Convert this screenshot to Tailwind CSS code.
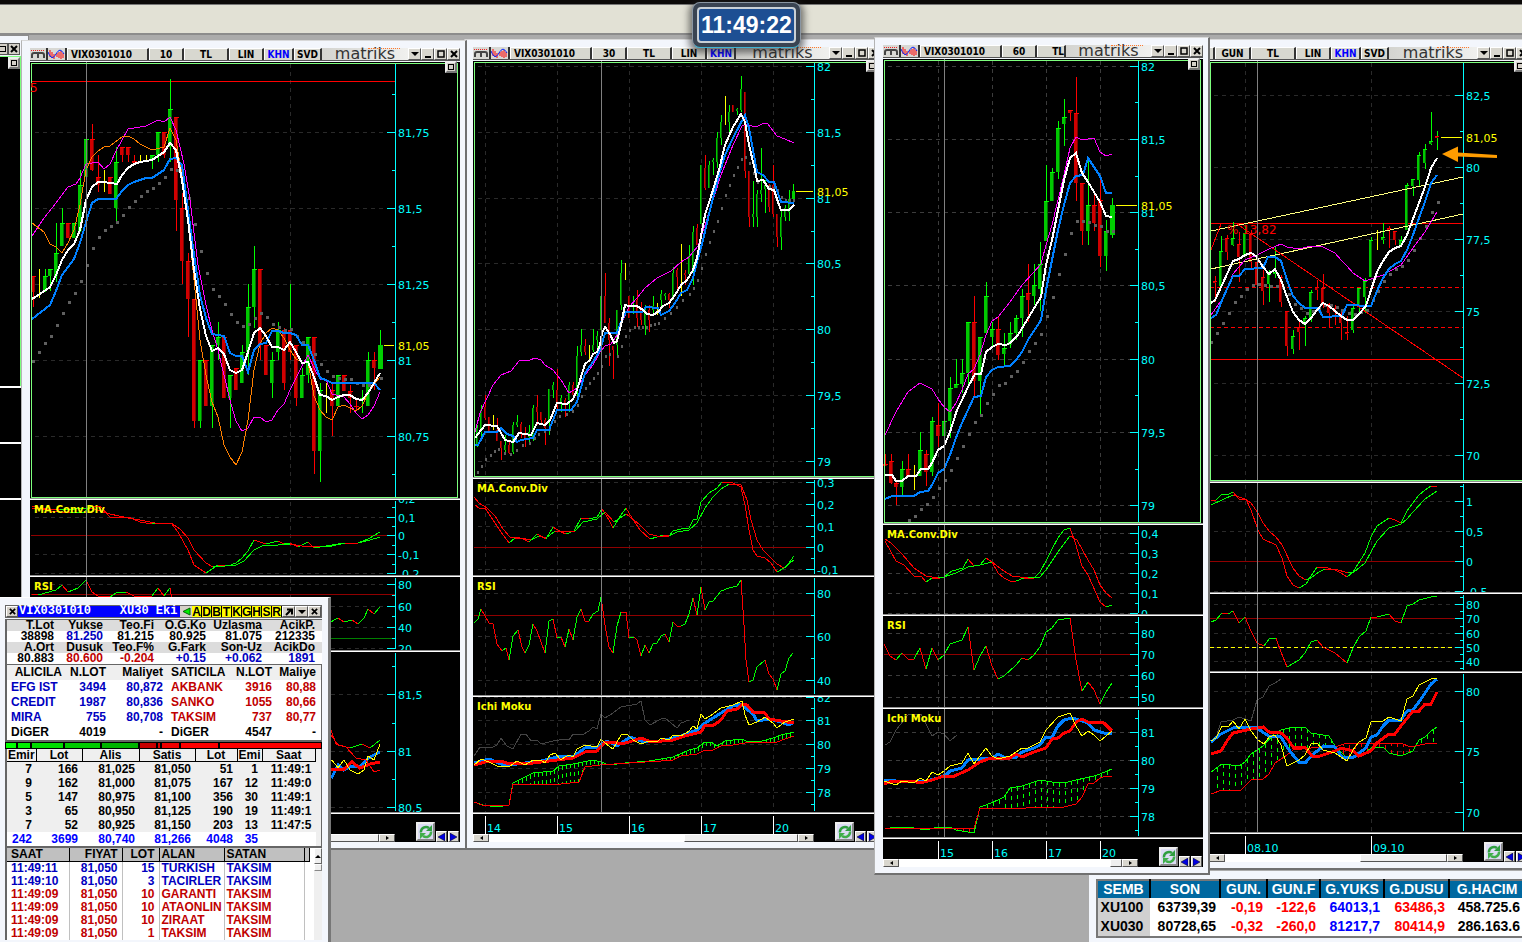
<!DOCTYPE html>
<html lang="tr">
<head>
    <meta charset="UTF-8">
    <meta name="viewport" content="width=device-width, initial-scale=1.0">
    <title>Matriks - VIX0301010</title>
    <script src="https://cdn.jsdelivr.net/npm/@tailwindcss/browser@4"></script>
</head>
<body class="bg-[#ababab] h-screen overflow-hidden relative font-['DejaVu_Sans',sans-serif]">
    <header class="h-[35px] bg-[#e2e1d5] border-t-4 border-t-[#0b0908] border-b-2 border-b-[#8c8c8c] shadow-[inset_0_1px_0_#777]"></header>

    <div class="absolute left-[692px] top-[2px] z-50 rounded-lg border border-[#8a96a2] border-b-[#3fb4d4] bg-[#3a4452] p-1 shadow-[0_2px_7px_3px_rgba(40,40,40,0.6)]">
        <div class="rounded border-2 border-[#c9d0d6] bg-[#1d4f93] px-[2px] text-center font-['Liberation_Sans',sans-serif] text-[23px] leading-[32px] font-bold text-white">11:49:22</div>
    </div>

    <!-- window cut off at the left edge -->
    <section class="absolute left-0 top-[35px] w-[29px] h-[570px] bg-[#f3f6fc] border-t border-r border-[#8c8c8c]">
        <div class="flex justify-between pt-[7px] pr-2">
            <button aria-label="Maximize" class="w-[8px] h-[12px] bg-[#d4d0c8] border border-[#555] border-l-0 flex items-center"><span class="size-[6px] border border-l-0 border-black"></span></button>
            <button aria-label="Close" class="size-[12px] bg-[#d4d0c8] border border-[#555] flex items-center justify-center"><svg width="8" height="8" viewBox="0 0 8 8"><path d="M1 1l6 6M7 1l-6 6" stroke="#000" stroke-width="2"/></svg></button>
        </div>
        <div class="mt-[1px] w-[21px] h-[330px] bg-black border-t border-r border-[#7dff7d] flex justify-end">
            <button aria-label="Maximize pane" class="size-[12px] bg-[#d4d0c8] border-2 border-[#eee] border-r-[#777] border-b-[#777] flex items-center justify-center"><span class="size-[6px] border border-black"></span></button>
        </div>
        <div class="w-[21px] h-[56px] bg-black border-t-2 border-white"></div>
        <div class="w-[21px] h-[56px] bg-black border-t-2 border-white"></div>
        <div class="w-[21px] h-[110px] bg-black border-t-2 border-white"></div>
    </section>

    <main id="windows"></main>

    <!-- order book -->
    <section class="absolute left-[-3px] top-[597px] z-40 w-[334px] h-[360px] bg-[#f3f6fc] border-t border-t-white border-r-[3px] border-r-[#777] pt-[7px] pl-2 pr-[6px] font-['Liberation_Sans',sans-serif] text-[12px] font-bold text-black">
        <div class="flex h-[13px] bg-[#d4d0c8] border border-[#666] leading-[12px]">
            <button aria-label="Close" class="w-[12px] border border-white border-r-[#555] border-b-[#555] flex items-center justify-center"><svg width="7" height="7" viewBox="0 0 8 8"><path d="M1 1l6 6M7 1l-6 6" stroke="#000" stroke-width="2"/></svg></button>
            <h2 class="flex-1 bg-[#0000ff] text-white font-['Liberation_Mono',monospace] whitespace-pre leading-[11px] pl-[1px]">VIX0301010    XU30 Eki</h2>
            <button aria-label="Previous" class="w-[12px] flex items-center justify-center"><svg width="9" height="9" viewBox="0 0 9 9"><path d="M8 1v7L1 4.5z" fill="#0e0" stroke="#060"/></svg></button>
            <div class="flex bg-[#ffff00] text-[12px]" id="letters"></div>
            <button aria-label="Detach" class="w-[13px] border border-white border-r-[#555] border-b-[#555] flex items-center justify-center"><svg width="8" height="8" viewBox="0 0 8 8"><path d="M1 7l5-5M2 1.5h5v5" fill="none" stroke="#000" stroke-width="2"/></svg></button>
            <button aria-label="Menu" class="w-[13px] border border-white border-r-[#555] border-b-[#555] flex items-center justify-center"><svg width="8" height="4" viewBox="0 0 8 4"><path d="M0 0h8L4 4z"/></svg></button>
            <button aria-label="Close book" class="w-[13px] border border-white border-r-[#555] border-b-[#555] flex items-center justify-center"><svg width="7" height="7" viewBox="0 0 8 8"><path d="M1 1l6 6M7 1l-6 6" stroke="#000" stroke-width="2"/></svg></button>
        </div>

        <table id="summary" class="mt-[1px] w-full h-[46px] table-fixed border-y border-l-2 border-[#666] bg-white text-right leading-[11px]">
            <colgroup><col class="w-[48px]"><col class="w-[49px]"><col class="w-[51px]"><col class="w-[52px]"><col class="w-[56px]"><col></colgroup>
        </table>

        <table id="brokers" class="w-full table-fixed border-l-2 border-b-2 border-r border-[#666] bg-white text-right leading-[15px]">
            <colgroup><col class="w-[56px]"><col class="w-[44px]"><col class="w-[57px]"><col class="w-[63px]"><col class="w-[46px]"><col></colgroup>
        </table>

        <div class="flex h-[7px] gap-[2px] bg-black py-[1px] px-[1px]">
            <span class="w-[10px] bg-[#00ff00]"></span><span class="w-[12px] bg-[#00f000]"></span><span class="w-[31px] bg-[#00dc00]"></span><span class="w-[35px] bg-[#00cc00]"></span><span class="w-[36px] bg-[#00b400]"></span><span class="w-[16px] bg-[#c80000]"></span><span class="w-[2px] bg-[#dc0000]"></span><span class="w-[17px] bg-[#f00000]"></span><span class="w-[37px] bg-[#ff0000]"></span><span class="flex-1 bg-[#ff0000]"></span>
        </div>

        <div class="bg-[#efefef] border-l-2 border-r border-b-2 border-[#666] pr-[5px]">
            <table id="depth" class="w-full table-fixed text-right text-[12px] leading-[14px]">
                <colgroup><col class="w-[29px]"><col class="w-[46px]"><col class="w-[57px]"><col class="w-[56px]"><col class="w-[42px]"><col class="w-[25px]"><col></colgroup>
            </table>
        </div>

        <div class="flex border-l-2 border-[#666] bg-white">
            <table id="trades" class="w-[303px] table-fixed text-[12px] leading-[13px]">
                <colgroup><col class="w-[62px]"><col class="w-[53px]"><col class="w-[37px]"><col class="w-[65px]"><col class="w-[80px]"><col></colgroup>
            </table>
            <div class="ml-1 flex-1 bg-[#efefef]">
                <button aria-label="Scroll up" class="w-full h-[16px] bg-[#efefef] border border-white border-r-[#666] border-b-[#666] flex items-center justify-center"><svg width="6" height="3" viewBox="0 0 6 3"><path d="M0 3h6L3 0z"/></svg></button>
                <div class="h-[7px] border border-white border-r-[#888] border-b-[#888]"></div>
            </div>
        </div>
    </section>

    <!-- index quotes -->
    <section class="absolute left-[1089px] right-0 top-[871px] z-[5] bg-[#f3f6fc] h-[80px] pl-[7px] pt-2 overflow-hidden font-['Liberation_Sans',sans-serif] text-[14px] font-bold">
        <table id="quotes" class="w-[430px] table-fixed border-2 border-[#777] bg-white text-right leading-[19px]">
            <colgroup><col class="w-[53px]"><col class="w-[70px]"><col class="w-[47px]"><col class="w-[53px]"><col class="w-[64px]"><col class="w-[65px]"><col></colgroup>
        </table>
    </section>

    <script>
        const CYAN = "#00ffff", WHITE = "#ffffff", BLUE = "#0080ff", MAG = "#ff00ff", ORANGE = "#ff8000", YELLOW = "#ffff00", RED = "#ff0000";

        // points are given in desktop pixels; every pane's viewBox starts at its own desktop position
        const windows = [
            {
                pos: "left-[21px] top-[40px] w-[446px] z-20", x0: 30, x1: 460, axis: 395, cross: 86, grid: [290], gridColor: "#2a2a2a", bw: 5,
                cells: [["VIX0301010", "w-[82px] text-left pl-[3px]"], ["10", "w-[35px]"], ["TL", "w-[45px]"], ["LIN", "w-[35px]"], ["KHN", "w-[30px] text-[#0000ff]"], ["SVD", "w-[28px]"]],
                times: [], timeY: [814, 834], thumb: "w-[60px]", track: "w-[40px]",
                panes: [
                    {
                        y: [62, 498], main: true, price: ["81,05", 345, 384],
                        labels: [["81,75", 132], ["81,5", 208], ["81,25", 284], ["81", 360], ["80,75", 436]], minor: [94, 170, 246, 322, 398, 474],
                        hlines: [[81, RED]], notes: [["5", 30, 92]],
                        candles: "33 276 307 276 292 r|39 269 298 y|45 269 292 276 291 g|50 269 291 269 276 g|56 223 282 253 276 g|62 208 246 223 246 g|68 223 238 r|74 223 238 g|80 170 232 185 231 g|86 133 177 139 177 g|92 124 171 139 170 r|98 155 192 177 185 r|104 170 192 y|110 177 194 r|116 147 221 162 208 g|122 147 162 147 155 r|128 147 162 147 155 r|134 155 163 161 163 r|140 155 162 y|146 155 162 y|152 155 169 155 160 g|158 132 162 132 155 g|164 132 158 132 155 r|170 79 162 109 147 g|176 117 231 117 200 r|182 193 284 208 261 r|188 253 337 261 299 r|194 299 428 299 421 r|200 360 428 360 421 g|206 360 406 r|212 345 428 345 406 g|218 322 360 337 345 g|224 337 398 r|230 375 428 375 398 g|236 368 390 r|242 345 383 352 383 g|248 284 375 307 352 g|254 246 328 269 307 g|260 269 360 269 345 r|266 345 375 r|272 352 398 360 383 g|278 322 360 330 352 g|284 328 390 330 383 r|290 284 330 284 284 g|290 330 360 330 352 r|296 345 406 345 398 r|302 368 398 375 398 g|308 337 383 337 375 g|314 337 474 337 451 r|320 383 482 390 451 g|326 383 413 y|332 383 436 390 406 r|338 375 406 g|344 375 391 r|350 385 413 391 398 r|356 398 411 406 407 r|362 390 413 398 400 g|368 352 406 360 406 g|374 352 390 360 368 r|380 330 369 345 369 G",
                        dots: "33,361 39,352 45,343 51,336 57,325 63,313 69,302 75,293 81,281 87,265 93,248 99,237 105,230 111,226 117,222 123,215 129,207 135,201 141,196 147,191 153,188 159,183 165,177 171,169 177,170 183,185 189,198 195,224 201,251 207,273 213,289 219,296 225,304 231,314 237,322 243,326 249,324 255,318 261,313 267,317 273,324 279,327 285,330 291,329 297,336 303,342 309,347 315,354 321,364 327,371 333,376 339,378 345,379 351,379 357,383 363,385 369,385 375,380 381,378",
                        lines: [
                            [MAG, 1, "32,236 44,218 56,203 68,187 76,184 80,178 86,164 98,162 104,169 110,164 116,151 128,129 146,126 158,120 164,122 170,117 176,130 184,164 190,200 198,265 206,305 212,330 218,350 224,375 230,400 236,421 242,431 248,428 254,417 260,417 266,422 272,420 278,410 284,404 290,390 296,378 302,366 308,355 314,368 320,379 326,380 332,394 344,397 350,404 356,413 362,419 368,415 374,406 380,392"],
                            [ORANGE, 1, "32,223 44,232 50,244 56,247 62,253 68,243 74,230 80,205 86,170 92,157 98,151 104,147 110,146 122,137 128,136 134,139 140,144 152,150 164,147 170,128 176,140 182,175 188,220 194,280 200,340 206,375 212,402 218,417 224,445 230,457 236,465 242,452 248,420 254,370 260,344 266,333 272,328 278,330 284,338 290,350 296,359 302,362 308,362 314,396 320,410 326,417 332,420 338,407 344,405 350,408 356,411 362,406 368,393 380,377"],
                            [BLUE, 2, "32,319 50,305 56,291 62,275 68,267 74,259 80,243 86,222 92,203 98,199 116,199 122,191 128,185 134,182 146,178 152,178 158,174 164,170 170,159 176,158 182,165 188,210 194,255 200,295 206,318 212,334 218,335 224,336 230,353 236,356 242,356 248,372 254,350 260,344 266,343 272,331 278,331 284,333 290,333 296,335 302,345 308,345 314,360 320,378 326,380 332,383 374,383 380,390"],
                            [WHITE, 2, "32,299 40,294 50,287 56,275 62,260 68,250 74,244 80,230 86,200 92,187 98,182 104,182 117,184 122,175 128,168 134,164 140,162 152,160 158,156 164,152 170,143 176,150 182,180 188,220 194,270 200,309 206,336 212,351 218,348 224,354 230,370 236,373 242,370 248,352 254,333 260,328 266,336 272,347 278,347 284,350 290,342 296,352 302,363 308,362 314,377 320,395 326,396 332,400 338,397 344,395 350,395 356,399 362,400 368,393 374,383 380,373"]
                        ]
                    },
                    {
                        y: [500, 575], title: "MA.Conv.Div", labels: [["0,2", 498], ["0,1", 517], ["0", 535], ["-0,1", 554], ["-0,2", 573]], minor: [507, 526, 545, 564], hlines: [[535, "#900000"]],
                        trend: ["32,506 50,511 70,513 84,512 92,506 100,506 110,517 128,517 140,522 152,524 160,523 171,523 178,532 188,550 194,565 206,573 212,569 218,565 228,566 236,563 242,558 248,551 254,540 266,544 278,541 284,544 290,543 298,547 308,542 314,548 326,546 338,544 350,543 358,543 368,539 380,532",
                            "32,508 60,510 90,508 110,514 128,518 140,520 155,523 171,523 180,529 188,538 194,550 206,563 213,567 225,566 236,565 244,561 254,550 262,546 278,545 290,544 302,546 320,547 332,546 345,543 358,543 370,540 380,537"]
                    },
                    {
                        y: [577, 650], title: "RSI", labels: [["80", 584], ["60", 606], ["40", 627], ["20", 648]], minor: [595, 616, 638], hlines: [[594, "#900000"], [638, "#008000"]],
                        trend: ["32,594 38,595 56,590 62,585 68,592 78,588 86,580 92,592 98,596 110,597 116,593 126,592 134,596 152,596 158,588 164,596 170,588 176,625 194,640 230,628 254,605 290,615 314,632 325,625 338,618 344,622 352,620 358,624 364,618 368,609 374,614 380,607"]
                    },
                    {
                        y: [652, 812], title: "", labels: [["81,5", 694], ["81", 751], ["80,5", 807]], minor: [666, 723, 779],
                        trend: ["300,770 331,735 338,745 350,748 362,744 370,748 380,740"],
                        lines: [[BLUE, 3, "320,770 332,777 338,765 344,770 352,766 360,767 366,760 372,756 380,752"], [RED, 3, "320,769 344,769 352,762 360,768 370,764 380,762"], [YELLOW, 1, "320,775 332,760 338,768 344,760 350,770 358,774 364,770 368,756 374,760 380,744"], [RED, 1, "331,730 336,744 346,747 356,758 366,760 374,772 380,770"]]
                    }
                ]
            },
            {
                pos: "left-[464px] top-[39px] w-[424px] z-10", x0: 473, x1: 881, axis: 814, cross: 601, grid: [485, 557, 629, 701, 773], gridColor: "#2a2a2a", bw: 3,
                cells: [["VIX0301010", "w-[82px] text-left pl-[3px]"], ["30", "w-[35px]"], ["TL", "w-[45px]"], ["LIN", "w-[35px]"], ["KHN", "w-[29px] text-[#0000ff]"]],
                times: [["14", 485], ["15", 557], ["16", 629], ["17", 701], ["20", 773]], timeY: [814, 834], thumb: "w-[114px]", track: "w-[30px]",
                panes: [
                    {
                        y: [61, 477], main: true, price: ["81,05", 191, 796],
                        labels: [["82", 66], ["81,5", 132], ["81", 198], ["80,5", 263], ["80", 329], ["79,5", 395], ["79", 461]], minor: [99, 165, 231, 296, 362, 428],
                        candles: "477 425 447 428 445 g|481 405 436 410 432 g|485 395 420 407 418 r|489 417 431 r|493 415 430 y|497 418 441 430 441 r|501 441 460 441 448 r|505 435 452 445 450 g|509 440 454 445 453 r|513 422 454 425 452 g|517 415 427 422 425 g|521 422 438 424 432 r|525 427 447 434 440 r|529 425 445 432 437 g|533 405 441 408 438 g|537 395 425 407 412 r|541 412 425 412 420 r|545 418 445 420 428 r|549 389 435 389 420 g|553 382 398 385 390 g|557 369 410 390 405 r|561 395 412 398 404 g|565 398 417 400 405 r|569 382 412 385 400 g|573 382 400 385 395 r|577 346 400 356 390 g|581 329 356 345 352 g|585 339 355 346 352 r|589 345 360 y|593 329 352 345 350 g|597 331 350 336 340 g|601 296 335 296 330 g|605 273 323 296 323 r|609 318 366 323 340 r|613 346 379 346 350 r|617 310 356 310 345 g|621 260 310 273 305 g|625 263 280 y|629 296 318 r|633 296 314 305 307 g|637 290 327 300 318 r|641 302 325 308 320 r|645 305 335 310 325 g|649 305 332 310 320 r|653 296 315 306 310 g|657 303 315 y|661 290 308 294 300 g|665 293 300 294 296 g|669 293 308 294 300 r|673 267 300 273 300 g|677 268 290 270 277 r|681 244 296 y|685 270 285 273 275 r|689 245 276 256 274 g|693 226 285 232 270 g|697 224 245 228 245 r|701 165 224 g|705 155 190 168 188 r|709 161 188 165 188 g|713 158 175 160 162 g|717 132 168 138 162 g|721 115 145 122 138 g|725 96 125 y|729 105 135 112 122 g|733 105 112 r|737 108 115 109 111 g|741 76 112 89 110 g|745 92 178 92 171 r|749 171 227 171 217 r|753 181 227 214 217 g|757 190 227 194 217 g|761 148 202 190 194 g|765 180 213 185 189 g|769 184 212 185 207 r|773 165 217 185 214 r|777 214 247 214 237 r|781 210 250 217 237 g|785 205 221 208 217 g|789 190 221 199 212 g|793 184 205 191 199 G",
                        dots: "478,472 482,466 486,459 491,455 495,451 499,449 505,453 511,454 517,450 523,445 530,443 535,438 539,434 545,431 550,429 555,421 560,416 567,414 573,411 578,405 582,396 586,388 590,383 594,378 598,373 602,366 606,356 610,354 618,356 622,346 626,336 630,330 635,327 639,327 643,327 647,327 651,325 655,324 659,323 665,318 671,313 677,307 683,300 690,294 694,288 698,280 702,268 706,254 710,242 714,231 718,221 722,208 726,195 730,185 734,175 738,167 742,159 746,157 750,163 754,173 758,182 766,184 770,186 774,188 778,190 782,197 786,200 790,200 794,200",
                        lines: [
                            [MAG, 1, "475,432 480,413 487,398 493,385 501,375 511,371 519,361 530,360 535,358 541,360 545,365 553,370 561,380 569,393 577,388 585,375 593,365 600,352 605,346 611,344 617,335 622,322 629,307 637,298 645,288 657,278 671,271 681,262 689,257 698,246 705,225 713,200 721,175 733,145 742,126 746,124 752,126 758,126 764,123 768,124 777,136 785,139 794,143"],
                            [BLUE, 2, "475,445 478,445 485,432 497,432 501,428 507,434 513,436 517,442 521,440 533,438 537,430 549,430 557,410 571,410 577,402 585,373 593,362 600,350 605,333 617,333 621,322 626,312 642,312 646,307 658,308 661,315 669,311 675,303 681,293 687,290 693,278 697,262 703,240 710,210 719,175 725,155 733,138 745,115 749,128 757,172 763,175 769,182 774,182 781,202 794,203"],
                            [WHITE, 2, "475,438 485,425 497,426 505,440 509,441 513,442 519,433 525,434 531,435 537,423 545,425 550,420 557,403 567,404 573,399 577,390 585,364 590,360 593,354 597,352 600,345 602,333 605,327 610,334 614,343 617,341 621,325 625,305 629,306 637,306 643,310 647,314 653,315 659,311 663,306 669,303 675,295 681,285 687,280 693,270 697,258 701,236 705,215 713,190 719,170 725,145 733,127 741,114 745,122 749,145 755,170 757,181 763,180 769,189 774,190 778,202 781,210 789,210 794,205"]
                        ]
                    },
                    {
                        y: [479, 575], title: "MA.Conv.Div", labels: [["0,3", 482], ["0,2", 504], ["0,1", 526], ["0", 547], ["-0,1", 569]], minor: [493, 515, 536, 558], hlines: [[547, "#900000"]],
                        trend: ["475,505 479,508 485,508 493,520 501,532 509,543 515,538 523,539 529,542 537,534 546,539 553,527 561,532 566,534 574,531 581,518 589,519 597,517 602,509 609,520 613,528 621,515 626,508 632,518 640,530 650,539 657,537 663,535 669,536 673,531 681,529 689,528 693,520 697,519 701,502 709,493 717,488 722,482 731,482 741,487 745,505 749,530 753,550 757,556 765,558 771,563 777,572 786,567 794,556",
                            "474,497 479,503 487,508 495,516 503,529 510,537 520,538 531,540 539,536 546,538 555,531 563,531 575,531 583,522 597,519 605,512 614,522 626,514 633,519 641,526 649,534 657,536 669,536 677,532 689,530 697,523 705,508 713,497 721,489 729,484 741,485 747,500 751,520 757,540 763,550 777,564 784,568 790,563 794,560"]
                    },
                    {
                        y: [577, 695], title: "RSI", labels: [["80", 593], ["60", 636], ["40", 680]], minor: [615, 658], hlines: [[615, "#900000"]],
                        trend: ["474,623 478,619 481,609 489,623 493,624 497,644 502,651 506,648 509,660 513,636 518,630 522,647 525,653 529,645 533,624 537,631 541,642 545,653 549,621 553,619 557,638 561,637 565,647 569,629 573,640 577,617 581,609 585,621 589,621 593,614 598,611 601,597 605,625 609,647 613,653 617,626 621,612 626,612 629,638 634,637 637,640 641,656 645,645 649,653 653,644 657,643 661,636 665,634 669,642 673,622 677,626 681,626 685,624 689,614 693,598 697,615 701,587 705,610 709,602 713,601 721,591 729,588 737,586 741,580 744,625 746,660 749,682 753,680 757,667 765,660 769,674 773,679 777,690 781,674 785,671 789,658 793,653"]
                    },
                    {
                        y: [697, 812], title: "Ichi Moku", labels: [["82", 697], ["81", 720], ["80", 744], ["79", 768], ["78", 792]], minor: [708, 732, 756, 780, 804],
                        cloud: [4, "474,802 483,805 497,807 509,805 513,783 525,777 533,773 553,771 559,766 573,764 593,760 601,762 609,765 625,763 649,761 673,757 689,750 697,748 705,742 711,742 717,746 725,741 741,739 749,742 762,741 773,738 781,735 794,732", "474,802 482,805 509,805 513,784 561,784 579,782 585,767 600,765 629,763 661,761 673,760 681,756 697,754 705,750 713,750 721,746 733,745 745,743 777,742 785,739 794,736"],
                        lines: [
                            ["#444", 1, "474,756 480,747 493,747 497,745 501,738 507,746 513,749 521,734 526,734 531,741 537,740 541,744 553,741 565,739 569,740 573,734 582,735 589,731 593,727 597,729 601,714 605,718 613,713 621,707 637,704 641,701 645,720 650,725 661,719 665,718 671,723 677,728 681,723 689,720"],
                            [BLUE, 3, "474,763 489,759 501,764 517,764 541,761 561,756 573,757 585,748 597,747 607,741 617,746 630,737 641,741 661,741 681,736 697,730 705,723 721,713 733,706 742,704 749,711 753,714 757,721 769,719 781,722 789,725 794,722"],
                            [RED, 3, "474,765 489,761 501,761 509,764 533,763 549,761 573,758 585,752 597,751 605,742 613,742 621,744 629,742 641,738 651,742 673,740 685,736 701,732 705,725 714,725 721,720 727,711 737,709 743,704 747,705 753,712 765,713 769,719 781,721 794,723"],
                            [YELLOW, 1, "474,765 481,759 489,762 497,766 509,767 517,761 525,765 533,760 541,760 545,763 550,755 555,753 561,760 565,757 569,755 573,757 577,749 585,745 597,747 601,739 605,743 613,749 621,735 627,734 633,740 641,744 649,741 657,742 661,738 669,740 673,735 681,736 689,731 693,726 697,729 701,714 705,719 713,714 721,708 733,705 742,701 745,715 749,725 757,722 765,717 773,723 777,728 785,722 794,719"]
                        ]
                    }
                ]
            },
            {
                pos: "left-[1200px] top-[39px] w-[336px] z-10", x0: 1209, x1: 1529, axis: 1463, cross: 1257, grid: [1245, 1371], gridColor: "#2a2a2a", bw: 4, noIcons: true,
                cells: [["", "w-[6px]"], ["GUN", "w-[36px]"], ["TL", "w-[45px]"], ["LIN", "w-[35px]"], ["KHN", "w-[30px] text-[#0000ff]"], ["SVD", "w-[28px]"]],
                times: [["08.10", 1245], ["09.10", 1371]], timeY: [834, 854], thumb: "w-[87px]", track: "w-[30px]",
                panes: [
                    {
                        y: [61, 481], main: true, price: ["81,05", 137, 1441],
                        labels: [["82,5", 95], ["80", 167], ["77,5", 239], ["75", 311], ["72,5", 383], ["70", 455]], minor: [131, 203, 275, 347, 419],
                        hlines: [[223, RED], [359, RED], [287, RED, "4 3"], [327, RED, "4 3"]], notes: [["% 13,82", 1227, 234]], arrow: true,
                        candles: "1215 276 302 281 283 r|1221 236 287 251 286 g|1227 235 260 238 252 r|1233 222 246 238 245 g|1239 232 282 244 257 r|1245 225 255 233 255 g|1251 230 268 234 262 r|1257 262 285 r|1263 270 305 277 291 r|1269 270 302 274 284 g|1275 247 278 272 274 g|1281 275 307 277 302 r|1287 311 356 311 346 r|1293 330 354 336 349 g|1299 320 350 327 332 r|1305 316 346 318 325 g|1311 290 322 292 318 g|1317 280 300 287 290 r|1323 274 308 288 303 r|1329 303 327 304 313 r|1335 305 325 308 312 r|1341 310 340 315 323 r|1347 316 340 332 334 r|1353 305 333 308 330 g|1359 288 312 288 307 g|1365 278 313 281 297 g|1371 237 277 240 277 g|1377 230 250 y|1383 223 244 237 240 g|1389 226 248 228 231 r|1395 231 245 231 240 r|1401 236 247 240 245 g|1407 183 230 185 230 g|1413 179 196 179 186 g|1419 152 186 155 180 g|1425 144 169 149 163 g|1431 112 145 141 144 g|1437 131 150 136 136 g|1437 136 138 r",
                        dots: "1211,342 1217,333 1223,323 1229,313 1235,302 1241,296 1247,289 1253,285 1259,284 1265,285 1271,286 1277,286 1283,287 1289,294 1295,304 1301,308 1307,313 1313,311 1319,308 1325,305 1331,305 1337,307 1342,310 1349,313 1355,314 1361,312 1367,310 1373,300 1378,291 1384,281 1390,274 1396,269 1402,266 1408,260 1414,250 1420,238 1426,226 1432,212 1438,202",
                        lines: [
                            ["#ffff80", 1, "1211,231 1463,177"], ["#ffff80", 1, "1211,269 1463,214"], [RED, 1, "1237,224 1463,378"], [RED, 1, "1211,250 1221,224"],
                            [MAG, 1, "1211,315 1223,298 1233,274 1245,260 1257,255 1269,249 1281,244 1287,247 1299,249 1311,246 1323,247 1335,253 1341,260 1347,266 1353,273 1359,277 1365,281 1371,279 1383,275 1401,265 1413,248 1425,232 1437,212"],
                            [BLUE, 2, "1211,318 1216,315 1223,298 1233,276 1239,276 1245,269 1263,268 1268,257 1275,257 1281,261 1287,280 1293,296 1299,303 1305,308 1318,308 1323,317 1342,316 1347,305 1371,306 1377,291 1383,278 1389,269 1395,264 1401,261 1407,250 1413,235 1419,218 1425,202 1431,183 1437,175"],
                            [WHITE, 2, "1211,303 1215,300 1223,283 1233,261 1239,259 1245,255 1251,253 1256,256 1263,267 1269,274 1275,269 1281,280 1287,297 1293,312 1299,320 1305,324 1311,318 1317,310 1323,303 1329,306 1335,311 1341,316 1347,320 1353,320 1359,314 1366,306 1371,290 1377,272 1383,261 1389,252 1395,248 1401,246 1407,235 1413,219 1419,203 1425,187 1431,168 1437,158"]
                        ]
                    },
                    {
                        y: [483, 592], title: "", labels: [["1", 501], ["0,5", 531], ["0", 561], ["-0,5", 591]], minor: [486, 516, 546, 576], hlines: [[561, "#900000"]],
                        trend: ["1211,500 1216,500 1221,495 1229,494 1233,492 1239,499 1246,499 1251,510 1258,530 1263,539 1276,545 1282,558 1287,576 1293,585 1299,588 1306,584 1311,576 1317,567 1324,567 1335,570 1341,573 1347,577 1353,572 1365,553 1371,537 1377,526 1389,518 1395,520 1401,523 1407,511 1413,503 1419,495 1425,490 1431,486 1437,487",
                            "1211,505 1233,495 1239,497 1245,499 1251,503 1258,513 1263,523 1270,532 1276,537 1282,545 1293,568 1299,576 1306,580 1311,578 1319,572 1325,569 1335,569 1348,573 1354,572 1365,563 1371,552 1377,541 1389,528 1401,524 1407,519 1413,512 1425,499 1437,491"]
                    },
                    {
                        y: [594, 671], title: "", labels: [["80", 604], ["70", 618], ["60", 633], ["50", 647], ["40", 661]], minor: [597, 611, 626, 640, 654, 668], hlines: [[618, "#900000"], [647, YELLOW, "4 3"]],
                        trend: ["1211,622 1216,620 1222,613 1228,614 1233,611 1239,623 1245,617 1251,631 1257,643 1264,646 1269,639 1276,638 1281,652 1287,667 1299,660 1305,653 1311,642 1317,640 1323,647 1335,653 1341,658 1347,663 1353,648 1359,637 1366,631 1371,617 1377,617 1389,614 1395,621 1401,623 1407,606 1413,604 1419,600 1431,597 1437,596"]
                    },
                    {
                        y: [673, 832], title: "", labels: [["80", 691], ["75", 751], ["70", 812]], minor: [721, 782],
                        cloud: [6, "1211,772 1222,764 1239,766 1245,762 1251,754 1263,746 1275,733 1281,730 1293,727 1305,727 1311,733 1329,736 1335,746 1345,756 1353,758 1365,753 1371,748 1383,747 1389,753 1401,756 1413,751 1419,740 1425,737 1431,731 1437,727", "1211,794 1222,790 1241,790 1251,780 1263,779 1269,774 1275,763 1287,755 1293,750 1311,748 1335,747 1347,743 1401,743 1410,747 1425,744 1437,743"],
                        lines: [
                            ["#444", 1, "1211,742 1216,738 1221,722 1233,720 1239,717 1245,719 1251,721 1257,700 1263,697 1269,686 1275,683 1281,679"],
                            [BLUE, 3, "1211,742 1221,734 1233,728 1245,727 1257,728 1264,733 1269,736 1281,737 1287,747 1293,755 1299,762 1306,762 1312,755 1324,746 1335,747 1342,757 1354,757 1366,748 1371,737 1377,735 1383,726 1389,720 1401,720 1407,711 1413,710 1419,702 1431,684 1437,679"],
                            [RED, 3, "1211,754 1221,751 1227,741 1233,733 1251,729 1263,727 1269,732 1281,733 1287,738 1293,747 1305,747 1312,756 1317,757 1335,751 1341,748 1353,751 1359,756 1371,751 1377,743 1389,734 1395,734 1401,726 1413,711 1419,711 1425,704 1431,704 1437,692"],
                            [YELLOW, 1, "1211,741 1216,738 1222,726 1228,727 1233,721 1239,729 1245,719 1251,731 1258,740 1264,744 1269,737 1275,735 1281,745 1287,766 1299,760 1305,755 1311,744 1317,743 1323,750 1335,753 1347,761 1353,750 1359,742 1366,738 1371,722 1383,721 1389,717 1401,721 1407,699 1413,696 1419,685 1431,679 1437,678"]
                        ]
                    }
                ]
            },
            {
                pos: "left-[874px] top-[37px] w-[336px] z-30", x0: 883, x1: 1203, axis: 1138, cross: 944, grid: [938, 992, 1046, 1100], gridColor: "#3c3c3c", bw: 5,
                cells: [["VIX0301010", "w-[82px] text-left pl-[3px]"], ["60", "w-[35px]"], ["TL", "w-[29px] text-right"]],
                times: [["15", 938], ["16", 992], ["17", 1046], ["20", 1100]], timeY: [839, 859], thumb: "w-[12px]", track: "w-[30px]",
                panes: [
                    {
                        y: [59, 523], main: true, price: ["81,05", 205, 1116],
                        labels: [["82", 66], ["81,5", 139], ["81", 212], ["80,5", 285], ["80", 359], ["79,5", 432], ["79", 505]], minor: [102, 176, 249, 322, 395, 469],
                        candles: "885 454 466 464 466 r|891 454 484 461 483 r|896 482 505 483 487 r|902 461 496 469 487 g|908 454 476 469 476 r|914 465 490 y|920 432 476 450 476 g|926 450 486 454 472 r|932 417 476 421 472 g|938 403 447 425 436 r|944 421 436 g|950 377 438 388 421 g|956 359 388 384 388 g|962 359 393 373 384 g|968 322 384 322 373 g|974 296 397 322 381 r|980 337 414 337 381 g|986 282 335 296 333 g|992 322 347 329 337 g|998 316 360 329 355 r|1004 333 366 348 354 g|1010 322 348 333 345 g|1016 315 340 318 333 g|1022 289 337 296 318 g|1028 264 322 293 300 r|1034 264 305 285 296 g|1040 242 311 264 289 g|1046 165 241 201 241 g|1052 168 201 172 201 g|1058 121 179 128 172 g|1064 99 146 117 124 g|1070 110 121 110 113 r|1076 77 201 113 183 r|1082 183 245 183 231 r|1088 157 245 205 231 g|1094 194 231 205 223 r|1100 175 267 200 256 r|1106 220 271 231 256 g|1112 198 238 205 235 G",
                        dots: "909,520 915,516 921,509 927,504 933,497 939,488 945,480 951,470 957,458 963,446 969,434 975,422 981,415 987,403 993,394 999,385 1005,383 1011,376 1017,371 1023,362 1029,351 1035,343 1041,334 1047,316 1053,297 1059,274 1065,254 1071,233 1077,221 1083,221 1089,222 1095,225 1101,226 1107,231 1113,231",
                        lines: [
                            [MAG, 1, "885,435 896,412 908,392 920,383 932,389 938,399 944,407 950,412 956,403 962,390 968,374 974,369 980,355 986,335 992,321 998,317 1010,302 1022,285 1034,272 1041,264 1046,245 1052,225 1058,200 1064,175 1070,148 1076,137 1082,140 1094,138 1100,152 1106,156 1112,154"],
                            [BLUE, 2, "885,499 892,496 914,496 920,492 928,491 932,485 938,473 944,469 950,455 957,435 962,423 968,410 974,397 981,396 986,377 992,370 998,367 1010,366 1016,360 1022,352 1028,340 1041,320 1046,290 1052,260 1058,230 1064,205 1070,183 1076,176 1083,175 1088,158 1094,167 1100,176 1106,193 1112,193"],
                            [WHITE, 2, "885,475 892,475 896,481 902,481 908,476 916,476 921,469 928,469 932,463 938,450 944,446 950,432 957,410 962,400 968,387 975,374 981,374 986,352 992,347 998,344 1006,345 1010,343 1018,335 1024,325 1030,315 1036,305 1041,297 1046,265 1052,240 1058,210 1064,180 1070,158 1076,153 1082,173 1088,182 1094,192 1100,202 1106,216 1112,217"]
                        ]
                    },
                    {
                        y: [525, 614], title: "MA.Conv.Div", labels: [["0,4", 533], ["0,3", 553], ["0,2", 573], ["0,1", 593], ["0", 613]], minor: [543, 563, 583, 603],
                        trend: ["885,541 896,561 904,565 914,576 921,576 926,582 932,578 940,578 944,577 952,571 963,568 968,559 974,566 980,565 986,558 992,562 998,573 1004,578 1010,581 1016,581 1024,578 1034,578 1040,572 1046,561 1052,549 1058,538 1064,530 1070,528 1076,545 1082,566 1088,575 1100,602 1106,607 1112,605",
                            "885,539 891,543 902,554 914,568 926,576 938,578 944,577 956,573 968,567 980,565 992,562 1004,571 1012,576 1028,578 1040,577 1046,570 1052,561 1058,552 1070,536 1077,540 1088,560 1094,570 1100,585 1106,593 1112,598"]
                    },
                    {
                        y: [616, 707], title: "RSI", labels: [["80", 633], ["70", 654], ["60", 675], ["50", 697]], minor: [622, 643, 665, 686], hlines: [[654, "#900000"]],
                        trend: ["884,644 890,656 896,660 902,653 908,659 914,659 920,648 926,669 932,648 938,660 944,655 950,644 962,640 968,627 974,670 980,656 986,646 992,666 998,679 1004,676 1016,665 1022,658 1028,660 1034,655 1040,647 1046,632 1052,628 1058,620 1070,618 1076,660 1082,691 1088,682 1094,690 1100,704 1106,692 1112,683"]
                    },
                    {
                        y: [709, 837], title: "Ichi Moku", labels: [["81", 732], ["80", 760], ["79", 788], ["78", 816]], minor: [718, 746, 774, 802, 830],
                        cloud: [6, "885,829 896,827 908,827 920,829 926,830 938,827 950,827 956,830 974,833 980,807 986,805 998,800 1004,797 1010,788 1022,786 1040,780 1052,782 1064,783 1076,780 1094,776 1100,774 1112,769", "885,828 938,828 956,828 974,828 980,808 986,808 1026,808 1034,807 1064,807 1076,804 1082,797 1088,784 1094,783 1100,778 1106,776 1112,776"],
                        lines: [
                            ["#444", 1, "885,745 890,742 896,730 908,715 921,714 926,724 932,736 938,732 944,734 950,741 957,735"],
                            [BLUE, 3, "884,780 908,782 926,781 938,778 946,775 950,771 962,768 968,760 992,758 998,754 1004,757 1016,757 1022,752 1034,748 1040,745 1046,737 1052,737 1058,726 1064,720 1072,718 1082,721 1088,723 1094,730 1104,733 1112,734"],
                            [RED, 3, "884,784 892,781 912,781 920,783 932,780 944,776 952,777 968,770 980,762 988,759 1010,758 1016,754 1022,757 1034,752 1046,748 1052,739 1058,738 1064,733 1070,731 1076,722 1082,719 1088,722 1104,723 1112,731"],
                            [YELLOW, 1, "884,781 896,785 902,781 914,783 920,778 926,781 932,772 938,775 944,771 950,766 962,763 968,753 974,764 986,748 992,756 998,759 1010,756 1022,748 1028,748 1040,742 1046,730 1058,717 1070,713 1076,726 1082,736 1088,731 1094,735 1100,741 1106,736 1112,731"]
                        ]
                    }
                ]
            }
        ];

        const toPts = s => s.split(" ").map(p => p.split(",").map(Number));
        const seg = (x1, y1, x2, y2, c, w = 1, dash = "") =>
            `<line x1="${x1}" y1="${y1}" x2="${x2}" y2="${y2}" stroke="${c}" stroke-width="${w}" ${dash ? `stroke-dasharray="${dash}"` : ""}/>`;

        function candle(c, bw) {
            const p = c.split(" ");
            const kind = p.pop();
            const [x, hi, lo, top = hi, bot = lo] = p.map(Number);
            const left = x - Math.floor(bw / 2);
            if (kind === "y") return seg(x + .5, hi, x + .5, lo, YELLOW);
            const [bright, mid, dark] = kind === "r" ? ["#ff0000", "#d00000", "#800000"] : ["#00ff00", "#00c800", "#007000"];
            let out = seg(x + .5, hi, x + .5, lo, bright);
            const h = Math.max(bot - top, 0);
            if (kind === "G") return out + `<rect x="${left}" y="${top}" width="${bw}" height="${h}" fill="#00d000"/>`;
            if (!h) return out;
            out += `<rect x="${left}" y="${top}" width="${bw - 1}" height="${h}" fill="${mid}"/>`;
            out += `<rect x="${left + bw - 2}" y="${top}" width="1" height="${h}" fill="${dark}"/>`;
            if (bw > 3) out += seg(left, top + .5, left + bw, top + .5, bright);
            return out;
        }

        // green while rising, red while falling
        function trend(s) {
            const pts = toPts(s);
            let up = "", down = "";
            for (let i = 1; i < pts.length; i++) {
                const d = `M${pts[i - 1]}L${pts[i]}`;
                if (pts[i][1] < pts[i - 1][1]) up += d; else down += d;
            }
            return `<path d="${down}" stroke="#ff0000" fill="none"/><path d="${up}" stroke="#00ff00" fill="none"/>`;
        }

        function yAt(pts, x) {
            for (let i = 1; i < pts.length; i++) {
                if (x <= pts[i][0]) {
                    const [ax, ay] = pts[i - 1], [bx, by] = pts[i];
                    return ay + (by - ay) * (x - ax) / (bx - ax);
                }
            }
            return pts[pts.length - 1][1];
        }

        function cloud([step, a, b]) {
            const pa = toPts(a), pb = toPts(b);
            let out = "";
            for (let x = pa[0][0] + step; x < pa[pa.length - 1][0]; x += step) {
                const ya = yAt(pa, x), yb = yAt(pb, x);
                if (Math.abs(ya - yb) > 2) out += seg(x + .5, ya, x + .5, yb, ya < yb ? "#00ff00" : "#ff0000", 1, "4 4");
            }
            return out + `<polyline points="${a}" stroke="#00ff00" fill="none"/><polyline points="${b}" stroke="#ff0000" fill="none"/>`;
        }

        function pane(w, p) {
            const [y0, y1] = p.y, width = w.x1 - w.x0, ax = w.axis;
            let s = `<rect x="${w.x0}" y="${y0}" width="${width}" height="${y1 - y0}" fill="#000"/>`;
            w.grid.forEach(x => s += seg(x + .5, y0 + 2, x + .5, y1, w.gridColor, 1, "4 4"));
            p.labels.forEach(([, y]) => s += seg(w.x0 + 5, y + .5, ax - 8, y + .5, w.gridColor, 1, "4 4"));
            (p.hlines || []).forEach(([y, c, dash]) => s += seg(w.x0 + 1, y + .5, ax, y + .5, c, 1, dash));
            if (p.candles) s += p.candles.split("|").map(c => candle(c, w.bw)).join("");
            if (p.cloud) s += cloud(p.cloud);
            if (p.dots) s += toPts(p.dots).map(([x, y]) => `<rect x="${x - 1}" y="${y - 1}" width="${w.bw > 3 ? 3 : 2}" height="3" fill="#606060"/>`).join("");
            (p.lines || []).forEach(([c, t, pts]) => s += `<polyline points="${pts}" fill="none" stroke="${c}" stroke-width="${t}"/>`);
            (p.trend || []).forEach(t => s += trend(t));
            s += seg(w.cross + .5, y0, w.cross + .5, y1, "#808080");
            s += seg(ax + .5, y0 + 1, ax + .5, y1 - 1, CYAN);
            p.minor.forEach(y => s += seg(ax - 3, y + .5, ax, y + .5, CYAN));
            let t = "";
            p.labels.forEach(([txt, y]) => {
                s += seg(ax - 8, y + .5, ax, y + .5, CYAN);
                t += `<text x="${ax + 3}" y="${y + 5}" fill="${CYAN}">${txt}</text>`;
            });
            if (p.price) {
                const [txt, y, from] = p.price;
                s += seg(from, y + .5, ax - 1, y + .5, YELLOW);
                t += `<rect x="${ax + 3}" y="${y - 5}" width="34" height="10" fill="#000"/>`;
                t += `<text x="${ax + 3}" y="${y + 5}" fill="${YELLOW}">${txt}</text>`;
            }
            (p.notes || []).forEach(([txt, x, y]) => t += `<text x="${x}" y="${y}" fill="${RED}" class="text-[12px]">${txt}</text>`);
            if (p.title) t += `<text x="${w.x0 + 4}" y="${y0 + 13}" fill="${YELLOW}" class="text-[10px] font-bold">${p.title}</text>`;
            if (p.main) s += `<rect x="${w.x0 + 1.5}" y="${y0 + 1.5}" width="${width - 4}" height="${y1 - y0 - 2}" fill="none" stroke="#7dff7d"/>`;
            if (p.arrow) t += `<path d="M1442 154L1458 146.5V152.5L1497 155V158L1458 156.5V162z" fill="#ff9c00"/>`;
            return `<svg class="block font-['DejaVu_Sans',sans-serif] text-[11px]" width="${width}" height="${y1 - y0}" viewBox="${w.x0} ${y0} ${width} ${y1 - y0}"><g shape-rendering="crispEdges">${s}</g>${t}</svg>`;
        }

        const bevel = "border border-white border-r-[#555] border-b-[#555] bg-[#d8d6ce] flex items-center justify-center shrink-0";

        function titleBar(w) {
            const icons = w.noIcons ? "" : `
                <span class="w-[18px] bg-[#d8d8d4] border-r-2 border-[#333] flex items-center"><svg width="16" height="11" viewBox="0 0 16 11"><path d="M1 1.5h13" stroke="#e22" stroke-dasharray="1 1"/><path d="M2 9V6q0-2 2-2h8q2 0 2 2v3M8 4v5" fill="none" stroke="#444" stroke-width="2"/></svg></span>
                <span class="w-[19px] bg-[#d8d8d4] border-r-2 border-[#333] flex items-center"><svg width="17" height="11" viewBox="0 0 17 11"><path d="M2 1v7M4 3v6M6 5v5M9 4v4M11 3v6M13 2v8M15 4v5" stroke="#f00"/><path d="M0 3C3 10 5 10 8 5S13 0 16 5" fill="none" stroke="#0020ff"/></svg></span>`;
            const cells = w.cells.map(([t, cls]) => `<button class="shrink-0 border-l border-t border-l-white border-t-white border-r-2 border-r-[#333] bg-[#d8d8d0] leading-[12px] ${cls}">${t}</button>`).join("");
            return `<div class="flex h-[13px] border-b border-[#555] bg-[#d8d8d0] font-['DejaVu_Sans_Condensed','DejaVu_Sans',sans-serif] text-[10px] font-bold text-black">${icons}${cells}
                <div class="relative flex-1 bg-linear-to-r from-[#d4d4d0] to-[#f0f0ee] text-center font-['DejaVu_Sans',sans-serif] text-[16px] leading-[12px] font-normal text-[#333]">matriks<span class="absolute right-2 top-0 w-8 border-t border-dotted border-[#ff7a30]"></span></div>
                <button aria-label="Menu" class="w-[13px] ${bevel}"><svg width="8" height="4" viewBox="0 0 8 4"><path d="M0 0h8L4 4z"/></svg></button>
                <button aria-label="Minimize" class="w-[13px] ${bevel}"><svg width="8" height="8" viewBox="0 0 8 8"><path d="M1 7h6" stroke="#000" stroke-width="2"/></svg></button>
                <button aria-label="Maximize" class="w-[13px] ${bevel}"><svg width="8" height="8" viewBox="0 0 8 8"><path d="M1 1h6v6h-6z" fill="none" stroke="#000" stroke-width="1.5"/></svg></button>
                <button aria-label="Close" class="w-[13px] ${bevel}"><svg width="8" height="8" viewBox="0 0 8 8"><path d="M1 1l6 6M7 1l-6 6" stroke="#000" stroke-width="2"/></svg></button>
            </div>`;
        }

        function footer(w) {
            const [y0, y1] = w.timeY, width = w.axis - w.x0;
            const marks = w.times.map(([t, x]) => `${seg(x + .5, y0 + 2, x + .5, y1, WHITE)}<text x="${x + 2}" y="${y1 - 2}" fill="${CYAN}">${t}</text>`).join("");
            return `<div class="flex h-[28px] bg-black">
                <div>
                    <svg class="block font-['DejaVu_Sans',sans-serif] text-[11px]" width="${width}" height="20" viewBox="${w.x0} ${y0} ${width} 20">${marks}</svg>
                    <div class="flex h-2 bg-white">
                        <button aria-label="Scroll left" class="w-[16px] ${bevel}"><svg width="3" height="4" viewBox="0 0 3 4"><path d="M3 0v4L0 2z"/></svg></button>
                        <span class="flex-1"></span>
                        <span class="${w.thumb} border border-white border-r-[#555] border-b-[#555] bg-[#efefef]"></span>
                        <button aria-label="Scroll right" class="w-[16px] ${bevel}"><svg width="3" height="4" viewBox="0 0 3 4"><path d="M0 0v4L3 2z"/></svg></button>
                    </div>
                </div>
                <div class="flex items-end gap-[1px] pl-[21px]">
                    <button aria-label="Refresh" class="mb-[1px] size-[19px] border-2 border-[#eee] border-r-[#888] border-b-[#888] bg-[#dcdcf4] flex items-center justify-center"><svg width="14" height="14" viewBox="0 0 14 14"><path d="M2 7.5a5 5 0 0 1 8-4.5" fill="none" stroke="#2f9e3f" stroke-width="2.5"/><path d="M12 6.5a5 5 0 0 1-8 4.5" fill="none" stroke="#3fae4a" stroke-width="2.5"/><path d="M7 6h6V0z" fill="#2f9e3f"/><path d="M7 8H1v6z" fill="#3fae4a"/></svg></button>
                    <button aria-label="Previous" class="size-[11px] ${bevel}"><svg width="7" height="8" viewBox="0 0 7 8"><path d="M7 0v8L0 4z" fill="#0000e0" stroke="#000" stroke-width=".5"/></svg></button>
                    <button aria-label="Next" class="size-[11px] ${bevel}"><svg width="7" height="8" viewBox="0 0 7 8"><path d="M0 0v8L7 4z" fill="#0000e0" stroke="#000" stroke-width=".5"/></svg></button>
                </div>
            </div>`;
        }

        document.getElementById("windows").innerHTML = windows.map(w => `
            <section class="absolute ${w.pos} border-t border-l border-t-[#d8d8d8] border-l-[#b4b4b4] border-r-2 border-b-2 border-r-[#707070] border-b-[#707070] bg-[#f3f6fc] pt-[7px] pl-2 pr-[5px] pb-[6px] overflow-hidden">
                ${titleBar(w)}
                <div class="relative pt-[1px]">
                    ${w.panes.map(p => pane(w, p)).join('<div class="h-[2px] border-t border-[#909090] bg-white"></div>')}
                    <button aria-label="Maximize pane" class="absolute right-[3px] top-0 size-[12px] bg-[#d4d0c8] border-2 border-[#eee] border-r-[#777] border-b-[#777] flex items-center justify-center"><span class="size-[6px] border border-black"></span></button>
                </div>
                <div class="h-[2px] border-t border-[#909090] bg-white"></div>
                ${footer(w)}
            </section>`).join("");

        document.getElementById("letters").innerHTML = [..."ADBTKGHSR"].map(l => `<button class="w-[10px] border-r border-black">${l}</button>`).join("");

        const B = "text-[#0000c0]", R = "text-[#c00000]", K = "text-black";
        const cell = (t, cls, tag = "td") => `<${tag} class="whitespace-nowrap p-0 ${cls}">${t}</${tag}>`;

        const summary = [
            ["T.Lot", "Yukse", "Teo.Fi", "O.G.Ko", "Uzlasma", "AcikP."],
            [["38898", K], ["81.250", B], ["81.215", K], ["80.925", K], ["81.075", K], ["212335", K]],
            ["A.Ort", "Dusuk", "Teo.F%", "G.Fark", "Son-Uz", "AcikDo"],
            [["80.883", K], ["80.600", R], ["-0.204", R], ["+0.15", B], ["+0.062", B], ["1891", B]]
        ];
        document.getElementById("summary").innerHTML += summary.map((r, i) => i % 2
            ? `<tr>${r.map(([t, c], j) => cell(t, c + (j === 5 ? " pr-[7px]" : ""))).join("")}</tr>`
            : `<tr class="bg-[#dcdcdc]">${r.map((t, j) => cell(t, "font-bold" + (j === 5 ? " pr-[7px]" : ""), "th")).join("")}</tr>`).join("");

        const brokers = [
            ["EFG IST", "3494", "80,872", "AKBANK", "3916", "80,88"],
            ["CREDIT", "1987", "80,836", "SANKO", "1055", "80,66"],
            ["MIRA", "755", "80,708", "TAKSIM", "737", "80,77"],
            ["DiGER", "4019", "-", "DiGER", "4547", "-"]
        ];
        document.getElementById("brokers").innerHTML += `<tr class="bg-[#efefef]">${["ALICILA", "N.LOT", "Maliyet", "SATICILA", "N.LOT", "Maliye"].map((t, j) => cell(t, j === 3 ? "text-left pl-2" : j === 5 ? "pr-[5px]" : "", "th")).join("")}</tr>` +
            brokers.map((r, i) => `<tr>${r.map((t, j) => cell(t, `${i === 3 ? K : j < 3 ? B : R} ${j === 0 ? "text-left pl-1" : j === 3 ? "text-left pl-2" : j === 5 ? "pr-[5px]" : ""}`)).join("")}</tr>`).join("");

        const depth = [
            ["7", "166", "81,025", "81,050", "51", "1", "11:49:1"],
            ["9", "162", "81,000", "81,075", "167", "12", "11:49:0"],
            ["5", "147", "80,975", "81,100", "356", "30", "11:49:1"],
            ["3", "65", "80,950", "81,125", "190", "19", "11:49:1"],
            ["7", "52", "80,925", "81,150", "203", "13", "11:47:5"],
            ["242", "3699", "80,740", "81,266", "4048", "35", ""]
        ];
        document.getElementById("depth").innerHTML += `<tr class="text-center">${["Emir", "Lot", "Alis", "Satis", "Lot", "Emi", "Saat"].map(t => cell(t, "border-r border-b border-black leading-[12px]", "th")).join("")}</tr>` +
            depth.map((r, i) => `<tr class="${i === 5 ? "bg-white text-[#0000ff]" : ""}">${r.map(t => cell(t, "pr-1")).join("")}</tr>`).join("");

        const trades = [
            ["11:49:11", "81,050", "15", "TURKISH", "TAKSIM", B],
            ["11:49:10", "81,050", "3", "TACIRLER", "TAKSIM", B],
            ["11:49:09", "81,050", "10", "GARANTI", "TAKSIM", R],
            ["11:49:09", "81,050", "10", "ATAONLIN", "TAKSIM", R],
            ["11:49:09", "81,050", "10", "ZIRAAT", "TAKSIM", R],
            ["11:49:09", "81,050", "1", "TAKSIM", "TAKSIM", R]
        ];
        const side = j => j === 1 || j === 2 ? "text-right pr-1" : j === 0 ? "text-left pl-1" : "text-left pl-[2px]";
        document.getElementById("trades").innerHTML += `<tr>${["SAAT", "FIYAT", "LOT", "ALAN", "SATAN", ""].map((t, j) => cell(t, `bg-[#c0c0c0] border-r border-b border-black leading-[13px] ${side(j)}`, "th")).join("")}</tr>` +
            trades.map(r => `<tr class="${r[5]}">${r.slice(0, 5).map((t, j) => cell(t, `border-r border-[#c0c0c0] ${side(j)}`)).join("")}<td></td></tr>`).join("");

        const quotes = [
            ["XU100", "63739,39", "-0,19", "-122,6", "64013,1", "63486,3", "458.725.6"],
            ["XU030", "80728,65", "-0,32", "-260,0", "81217,7", "80414,9", "286.163.6"]
        ];
        const quoteColors = ["bg-[#d0d0d0] text-center", "", "text-[#ff0000]", "text-[#ff0000]", "text-[#0000ff]", "text-[#ff0000]", ""];
        document.getElementById("quotes").innerHTML += `<tr class="bg-[#0068a0] text-center text-white">${["SEMB", "SON", "GUN.", "GUN.F", "G.YUKS", "G.DUSU", "G.HACIM"].map(t => cell(t, "border-r-2 border-r-black border-l border-l-white leading-[17px]", "th")).join("")}</tr>` +
            quotes.map(r => `<tr>${r.map((t, j) => cell(t, "pr-1 " + quoteColors[j])).join("")}</tr>`).join("");
    </script>
</body>
</html>
